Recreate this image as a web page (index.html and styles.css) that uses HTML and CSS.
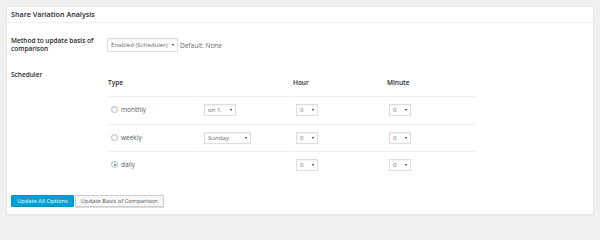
FILE: index.html
```html
<!DOCTYPE html>
<html>
<head>
<meta charset="utf-8">
<link rel="stylesheet" href="styles.css">
</head>
<body>
<div class="panel">
  <h3 class="panel-header">Share Variation Analysis</h3>
  <div class="panel-body">
    <div class="form-row first">
      <div class="form-label">Method to update basis of comparison</div>
      <div class="form-field inline">
        <span class="sel"><select class="s-method"><option>Enabled (Scheduler)</option></select></span>
        <span class="hint">Default: None</span>
      </div>
    </div>
    <div class="form-row second">
      <div class="form-label">Scheduler</div>
      <div class="form-field">
        <table class="sched">
          <thead>
            <tr><th>Type</th><th></th><th>Hour</th><th>Minute</th></tr>
          </thead>
          <tbody>
            <tr>
              <td><label class="radio"><input type="radio" name="t"> monthly</label></td>
              <td><span class="sel"><select class="s-day"><option>on 1.</option></select></span></td>
              <td><span class="sel"><select class="s-num"><option>0</option></select></span></td>
              <td><span class="sel"><select class="s-num"><option>0</option></select></span></td>
            </tr>
            <tr>
              <td><label class="radio"><input type="radio" name="t"> weekly</label></td>
              <td><span class="sel"><select class="s-week"><option>Sunday</option></select></span></td>
              <td><span class="sel"><select class="s-num"><option>0</option></select></span></td>
              <td><span class="sel"><select class="s-num"><option>0</option></select></span></td>
            </tr>
            <tr class="last">
              <td><label class="radio"><input type="radio" name="t" checked> daily</label></td>
              <td></td>
              <td><span class="sel"><select class="s-num"><option>0</option></select></span></td>
              <td><span class="sel"><select class="s-num"><option>0</option></select></span></td>
            </tr>
          </tbody>
        </table>
      </div>
    </div>
    <div class="buttons">
      <button class="btn primary">Update All Options</button>
      <button class="btn">Update Basis of Comparison</button>
    </div>
  </div>
</div>
</body>
</html>
```

FILE: styles.css
```css
html, body {
  margin: 0;
  padding: 0;
}
body {
  background: #f1f1f1;
  padding: 6px;
  font-family: "Open Sans", "Liberation Sans", sans-serif;
  font-size: 6.5px;
  color: #444;
}
.panel {
  background: #fff;
  border: 1px solid #e5e5e5;
  box-shadow: 0 1px 1px rgba(0,0,0,0.04);
  width: 586px;
  height: 207px;
  box-sizing: content-box;
}
.panel-header {
  margin: 0;
  height: 15px;
  line-height: 15px;
  padding: 0 4px;
  font-size: 7.2px;
  font-weight: 600;
  color: #23282d;
  border-bottom: 1px solid #eee;
}
.panel-body {
  padding: 0 4px;
}
.form-row {
  display: flex;
}
.form-row.first {
  padding-top: 14px;
}
.form-row.second {
  padding-top: 18px;
}
.form-label {
  width: 96px;
  flex: none;
  font-size: 6.5px;
  font-weight: 600;
  color: #23282d;
  line-height: 8px;
}
.form-field.inline {
  display: flex;
  align-items: center;
  gap: 2px;
  height: 16px;
}
.hint {
  color: #666;
}
.sel {
  position: relative;
  display: inline-block;
  vertical-align: middle;
}
.sel::after {
  content: "";
  position: absolute;
  right: 4px;
  top: 50%;
  margin-top: -1px;
  border-left: 1.5px solid transparent;
  border-right: 1.5px solid transparent;
  border-top: 2.5px solid #222;
}
select {
  -webkit-appearance: none;
  appearance: none;
  font-family: "Open Sans", "Liberation Sans", sans-serif;
  font-size: 6.1px;
  color: #666;
  background: #fff;
  border: 1px solid #ddd;
  box-shadow: inset 0 1px 1px rgba(0,0,0,0.05);
  border-radius: 0;
  margin: 0;
  padding: 0 3px;
  height: 12px;
  line-height: 10px;
  display: block;
  box-sizing: border-box;
}
.s-method { width: 71px; height: 14px; }
.s-day { width: 32px; }
.s-week { width: 47px; }
.s-num { width: 22px; }
.sched {
  border-collapse: separate;
  border-spacing: 1px 0;
  margin-left: -1px;
}
.sched th {
  text-align: left;
  font-weight: 600;
  color: #23282d;
  padding: 7px 0 9px 0;
  line-height: 9px;
  border-bottom: 1px solid #eee;
}
.sched th:nth-child(1) { width: 91px; padding-left: 1px; }
.sched th:nth-child(2) { width: 91px; }
.sched th:nth-child(3) { width: 91px; padding-left: 1px; }
.sched th:nth-child(4) { width: 89px; padding-left: 2px; }
.sched td {
  height: 26.5px;
  padding: 0 0 0 4px;
  border-bottom: 1px solid #eee;
  vertical-align: middle;
}
.sched tr.last td {
  border-bottom: none;
}
.radio {
  display: inline-flex;
  align-items: center;
  gap: 3px;
  color: #555;
}
.radio input {
  -webkit-appearance: none;
  appearance: none;
  width: 7px;
  height: 7px;
  margin: 0;
  border: 1px solid #b4b9be;
  border-radius: 50%;
  background: #fff;
  box-shadow: inset 0 1px 1px rgba(0,0,0,0.1);
  box-sizing: border-box;
  position: relative;
}
.radio input:checked::before {
  content: "";
  position: absolute;
  left: 1.5px;
  top: 1.5px;
  width: 2px;
  height: 2px;
  border-radius: 50%;
  background: #1e8cbe;
}
.buttons {
  display: flex;
  gap: 1px;
  margin-top: 16px;
}
.btn {
  font-family: "Open Sans", "Liberation Sans", sans-serif;
  font-size: 5.8px;
  height: 12px;
  line-height: 10px;
  padding: 0 5px;
  margin: 0;
  border: 1px solid #ccc;
  background: #f7f7f7;
  color: #555;
  border-radius: 1px;
  box-shadow: 0 1px 0 #ddd;
}
.btn.primary {
  background: #00a0d2;
  border-color: #0092c4;
  color: #fff;
  box-shadow: none;
}
```
